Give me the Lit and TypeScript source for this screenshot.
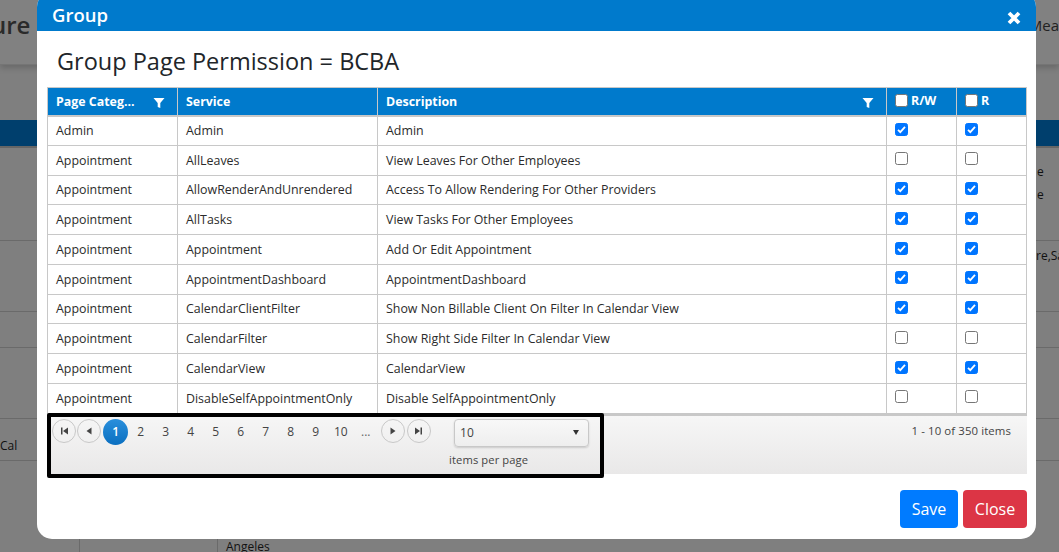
import { LitElement, html, css, svg } from "lit";
import { customElement } from "lit/decorators.js";

const rows: [string, string, string, boolean, boolean][] = [
  ["Admin", "Admin", "Admin", true, true],
  ["Appointment", "AllLeaves", "View Leaves For Other Employees", false, false],
  ["Appointment", "AllowRenderAndUnrendered", "Access To Allow Rendering For Other Providers", true, true],
  ["Appointment", "AllTasks", "View Tasks For Other Employees", true, true],
  ["Appointment", "Appointment", "Add Or Edit Appointment", true, true],
  ["Appointment", "AppointmentDashboard", "AppointmentDashboard", true, true],
  ["Appointment", "CalendarClientFilter", "Show Non Billable Client On Filter In Calendar View", true, true],
  ["Appointment", "CalendarFilter", "Show Right Side Filter In Calendar View", false, false],
  ["Appointment", "CalendarView", "CalendarView", true, true],
  ["Appointment", "DisableSelfAppointmentOnly", "Disable SelfAppointmentOnly", false, false],
];

const filter = svg`<svg class="filter" width="12" height="12" viewBox="0 0 12 12"><path fill="#fff" d="M.5 1h11L7.300 6v5L4.700 10V6z"/></svg>`;

const nav = (d: string, cls = "") => html`<span class="nav ${cls}"><svg width="12" height="12" viewBox="0 0 12 12"><path fill="#444" d="${d}"/></svg></span>`;

@customElement("app-root")
export class AppRoot extends LitElement {
  static styles = css`
    :host { display: block; width: 1059px; height: 552px; overflow: hidden; position: relative;
      font-family: "Open Sans", "Noto Sans", sans-serif; background: #7f7f7f; color: #212529; }
    .page { height: 552px; display: flex; flex-direction: column; font-size: 12px; color: #111; }
    .top { flex: none; height: 64px; background: #818181; border-bottom: 1px solid #757575; display: flex; justify-content: space-between; box-shadow: 0 3px 6px rgba(0,0,0,.18); }
    .top b { font-weight: 600; font-size: 24px; line-height: 50px; margin-left: -9px; color: #2a2a2a; }
    .top span { font-size: 15px; line-height: 50px; margin-right: 0; color: #222; }
    .band { flex: none; margin-top: 55px; height: 26px; background: #003f6d; border-bottom: 2px solid #666; }
    .bgrow { flex: none; border-bottom: 1px solid #6a6a6a; position: relative; box-sizing: border-box; }
    .r1 { height: 93px; }
    .r2 { height: 71px; }
    .r3 { height: 36px; }
    .r4 { height: 71px; }
    .r5 { height: 42px; }
    .r6 { height: 92px; border: 0; display: flex; }
    .cell { width: 137px; margin-left: 79px; border-left: 1px solid #6a6a6a; border-right: 1px solid #6a6a6a; }
    .bgt { position: absolute; white-space: nowrap; }
    .modal { position: absolute; left: 37px; top: -8px; width: 999px; height: 547px; background: #fff;
      border-radius: 15px; overflow: hidden; display: flex; flex-direction: column; }
    .mh { flex: none; height: 39px; background: #007acc; color: #fff; display: flex; justify-content: space-between;
      align-items: flex-end; padding: 0 15px; box-sizing: border-box; }
    .mh .t { font-size: 18.500px; font-weight: 600; line-height: 29px; padding-bottom: 2px; }
    .mh svg { margin: 0 0 6px 0; }
    .mb { flex: 1; padding: 0 9px 0 10px; display: flex; flex-direction: column; }
    h3 { margin: 14px 0 0 10px; font-size: 23.500px; font-weight: 400; line-height: 33px; height: 42px; flex: none; }
    table { border-collapse: collapse; table-layout: fixed; width: 980px; font-size: 12.400px; flex: none; }
    th { height: 28px; background: #007acc; color: #fff; font-weight: 700; text-align: left; padding: 0 8px;
      border: 1px solid #c8c8c8; border-bottom-width: 2px; font-size: 12.400px; white-space: nowrap; position: relative; box-sizing: border-box; }
    td { height: 29.750px; padding: 0 8px; border: 1px solid #c8c8c8; white-space: nowrap; box-sizing: border-box; color: #2b2b2b; }
    .filter { position: absolute; right: 12px; top: 9px; }
    .hc { display: flex; align-items: center; gap: 3px; margin-top: -1px; }
    .box { display: inline-block; width: 13px; height: 13px; box-sizing: border-box; border: 1px solid #767676; border-radius: 2.500px; background: #fff; vertical-align: middle; }
    .box.on { background: #0075ff; border-color: #0075ff; display: inline-flex; align-items: center; justify-content: center; }
    td.c { padding: 0 8px 5px; }
    .pager { height: 60px; flex: none; box-sizing: border-box; border-top: 2px solid #c8c8c8; background: linear-gradient(#f6f6f6, #e9e8e8); position: relative; display: flex;
      justify-content: space-between; font-size: 12px; color: #444; width: 980px; }
    .pl { display: flex; align-items: flex-start; padding: 3px 0 0 4.500px; box-sizing: border-box; }
    .nav { width: 24px; height: 24px; box-sizing: border-box; border: 1px solid #c8c8c8; border-radius: 50%; display: flex; align-items: center; justify-content: center; margin-right: 1.800px; }
    .nav.gap { margin-left: 3.200px; }
    .num { width: 25px; height: 26px; line-height: 25px; text-align: center; }
    .num.on { width: 25.200px; height: 26px; border-radius: 50%; background: linear-gradient(#2a8fdc, #0a6fc0); color: #fff; font-weight: 600; }
    .num.dots { color: #666; }
    .ps { margin-left: 21px; width: 135px; display: flex; flex-direction: column; align-items: flex-start; }
    .sel { width: 135px; height: 28px; flex: none; box-sizing: border-box; border: 1px solid #c8c8c8; border-radius: 4px; background: linear-gradient(#f8f8f8,#eee); box-shadow: 0 1px 2px rgba(0,0,0,.15);
      display: flex; align-items: center; justify-content: space-between; padding: 0 9px 0 5px; color: #444; }
    .sel i { width: 0; height: 0; border: 3.500px solid transparent; border-top: 5px solid #333; border-bottom: 0; }
    .ipp { font-size: 11.200px; margin: 6px 0 0 -5px; color: #444; line-height: 14px; letter-spacing: .1px; white-space: nowrap; }
    .info { padding: 7px 16px 0 0; font-size: 11.400px; letter-spacing: .1px; }
    .mark { position: absolute; left: 0; top: -3px; width: 557px; height: 65px; box-sizing: border-box; border: 4px solid #000; border-radius: 2px; pointer-events: none; }
    .mf { display: flex; justify-content: flex-end; gap: 5px; margin-top: 16.500px; flex: none; }
    .btn { height: 38px; box-sizing: border-box; border-radius: 4px; color: #fff; font-size: 16px; line-height: 38px; text-align: center; }
    .save { width: 58px; background: #007bff; }
    .close { width: 64px; background: #dc3545; }
  `;

  private box(on: boolean) {
    return html`<span class="box ${on ? "on" : ""}">${on
      ? html`<svg width="9" height="9" viewBox="0 0 9 9"><path d="M1 4.800l2.300 2.300L8 1.800" fill="none" stroke="#fff" stroke-width="1.800"/></svg>`
      : ""}</span>`;
  }

  render() {
    return html`
      <div class="page">
        <div class="top"><b>ure</b><span>Mea</span></div>
        <div class="band"></div>
        <div class="bgrow r1"><span class="bgt" style="left:1037px;top:15px">e</span><span class="bgt" style="left:1037px;top:38px">e</span></div>
        <div class="bgrow r2"><span class="bgt" style="left:1036px;top:6px">re,Sa</span></div>
        <div class="bgrow r3"></div>
        <div class="bgrow r4"></div>
        <div class="bgrow r5"><span class="bgt" style="left:0;top:18px">Cal</span></div>
        <div class="r6"><div class="cell"></div><span class="bgt" style="left:226px;top:538px">Angeles</span></div>
      </div>
      <div class="modal">
        <div class="mh"><span class="t">Group</span>
          <svg width="14" height="14" viewBox="0 0 14 14"><path d="M2 2l10 10M12 2L2 12" stroke="#fff" stroke-width="3.800"/></svg>
        </div>
        <div class="mb">
          <h3>Group Page Permission = BCBA</h3>
          <table>
            <colgroup><col style="width:130px"/><col style="width:200px"/><col style="width:509px"/><col style="width:70px"/><col style="width:70px"/></colgroup>
            <thead><tr>
              <th>Page Categ...${filter}</th><th>Service</th><th>Description${filter}</th>
              <th><span class="hc">${this.box(false)}R/W</span></th><th><span class="hc">${this.box(false)}R</span></th>
            </tr></thead>
            <tbody>
              ${rows.map((r) => html`<tr><td>${r[0]}</td><td>${r[1]}</td><td>${r[2]}</td><td class="c">${this.box(r[3])}</td><td class="c">${this.box(r[4])}</td></tr>`)}
            </tbody>
          </table>
          <div class="pager">
            <div class="pl">
              ${nav("M3 2.500h1.500v7H3zM10 2.500v7L5 6z")}
              ${nav("M8.500 2.500v7L3.500 6z")}
              <span class="num on">1</span>
              ${["2","3","4","5","6","7","8","9","10"].map((n) => html`<span class="num">${n}</span>`)}
              <span class="num dots">...</span>
              ${nav("M3.500 2.500v7l5-3.500z", "gap")}
              ${nav("M2 2.500v7L7 6zM7.500 2.500H9v7H7.500z")}
              <div class="ps"><div class="sel"><span>10</span><i></i></div><div class="ipp">items per page</div></div>
            </div>
            <div class="info">1 - 10 of 350 items</div>
            <div class="mark"></div>
          </div>
          <div class="mf"><div class="btn save">Save</div><div class="btn close">Close</div></div>
        </div>
      </div>
    `;
  }
}
